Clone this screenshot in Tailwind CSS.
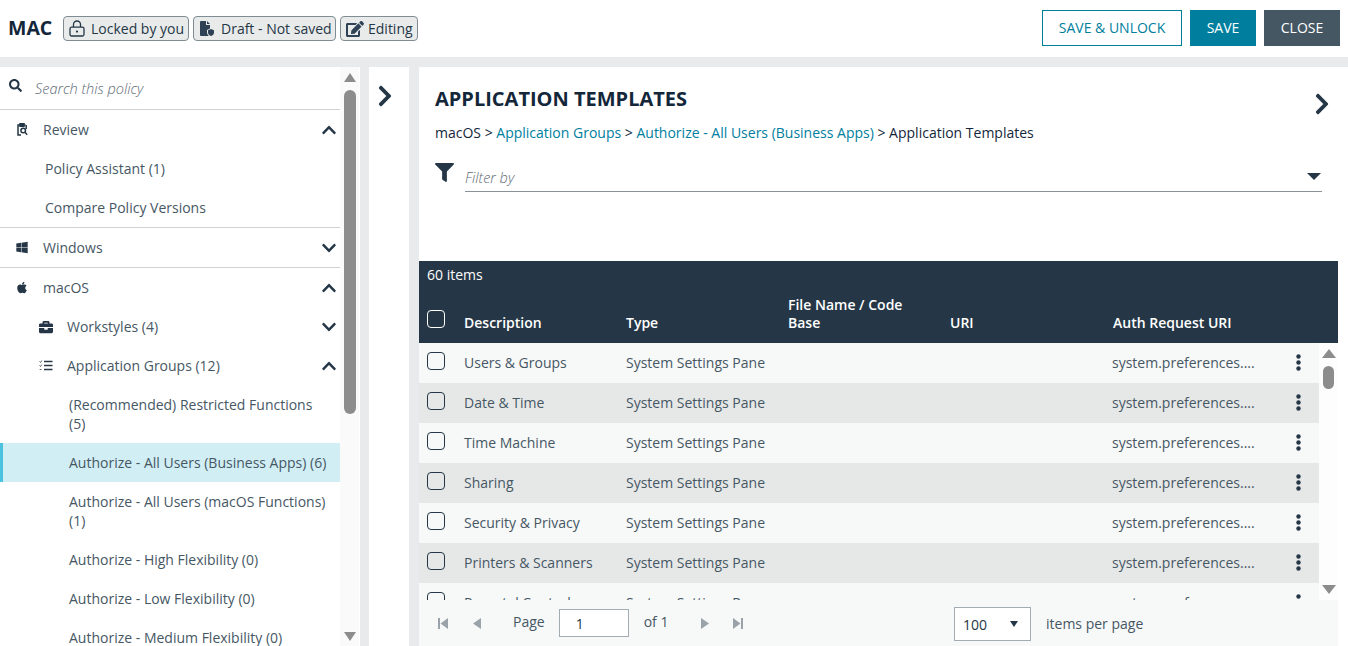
<!DOCTYPE html>
<html lang="en">
<head>
<meta charset="utf-8">
<title>MAC</title>
<script src="https://cdn.jsdelivr.net/npm/@tailwindcss/browser@4"></script>
</head>
<body class="font-['Open_Sans',sans-serif] text-[14px] text-[#465764] bg-white">
<div class="w-[1348px] h-[646px] overflow-hidden flex flex-col">

  <!-- top bar -->
  <header class="h-[57px] shrink-0 bg-white flex items-start pl-[8px] pr-[8px]">
    <h1 class="w-[55px] text-[19.500px] leading-[24px] font-bold text-[#14273a] mt-[16px]">MAC</h1>
    <div class="flex gap-[4px] mt-[16px]">
      <span class="h-[25px] w-[126px] rounded-[4px] border border-[#7f8c94] bg-[#e9ebeb] flex items-center pl-[5px] gap-[6px] text-[#253746] whitespace-nowrap">
        <svg class="w-[16px] h-[17px]" viewBox="0 0 16 17" fill="none" stroke="#253746" stroke-width="1.300"><rect x="1" y="7.200" width="14" height="8.800" rx="1.500"/><path d="M4.500 7V4.500a3.500 3.500 0 0 1 7 0V7"/><circle cx="8" cy="11.600" r="1.100" fill="#253746" stroke="none"/></svg>
        Locked by you
      </span>
      <span class="h-[25px] w-[143px] rounded-[4px] border border-[#7f8c94] bg-[#e9ebeb] flex items-center pl-[6px] gap-[7px] text-[#253746] whitespace-nowrap">
        <svg class="w-[14px] h-[15px]" viewBox="0 0 14 15" fill="#2f4255"><path d="M0 1a1 1 0 0 1 1-1h5v4h4v3.500L7 9v2c0 1.500.5 2.800 1.700 4H1a1 1 0 0 1-1-1z"/><path d="M7 0l3 3H7z"/><path d="M11 8l3 1.300v2.400c0 1.500-1.300 2.700-3 3.300-1.700-.6-3-1.800-3-3.300V9.300z"/></svg>
        Draft - Not saved
      </span>
      <span class="h-[25px] w-[78px] rounded-[4px] border border-[#7f8c94] bg-[#e9ebeb] flex items-center pl-[5px] gap-[4px] text-[#253746] whitespace-nowrap">
        <svg class="w-[18px] h-[16px]" viewBox="0 0 576 512" fill="#2f4255"><path d="M402.600 83.200l90.200 90.200c3.800 3.800 3.800 10 0 13.800L274.400 405.600l-92.800 10.300c-12.400 1.400-22.900-9.100-21.500-21.500l10.300-92.800L388.800 83.200c3.800-3.800 10-3.800 13.800 0zm162-22.900l-48.800-48.800c-15.200-15.200-39.900-15.200-55.200 0l-35.400 35.400c-3.800 3.800-3.800 10 0 13.800l90.200 90.200c3.800 3.800 10 3.800 13.800 0l35.400-35.400c15.200-15.300 15.200-40 0-55.200zM384 346.200V448H64V128h229.800c3.200 0 6.200-1.300 8.500-3.500l40-40c7.600-7.600 2.200-20.500-8.500-20.500H48C21.500 64 0 85.500 0 112v352c0 26.500 21.500 48 48 48h352c26.500 0 48-21.500 48-48V306.200c0-10.700-12.900-16-20.500-8.500l-40 40c-2.200 2.300-3.500 5.300-3.500 8.500z"/></svg>
        Editing
      </span>
    </div>
    <div class="ml-auto flex gap-[8px] mt-[10px]">
      <button class="w-[140px] h-[36px] pb-[2px] border border-[#007e9e] bg-white text-[#007e9e]">SAVE &amp; UNLOCK</button>
      <button class="w-[66px] h-[36px] pb-[2px] bg-[#007e9e] text-white">SAVE</button>
      <button class="w-[76px] h-[36px] pb-[2px] bg-[#465764] text-white">CLOSE</button>
    </div>
  </header>

  <!-- body -->
  <div class="flex-1 min-h-0 bg-[#e9eaeb] pt-[10px] flex">

    <!-- policy tree -->
    <aside class="w-[360px] shrink-0 bg-white flex overflow-hidden">
      <nav class="w-[340px] shrink-0">
        <div class="h-[43px] border-b border-[#d0d3d4] flex items-start pl-[9px]">
          <svg class="w-[13px] h-[13px] mt-[12px]" viewBox="0 0 512 512" fill="#253746"><path d="M505 442.700L405.300 343c-4.500-4.500-10.600-7-17-7H372c27.600-35.300 44-79.700 44-128C416 93.100 322.900 0 208 0S0 93.100 0 208s93.100 208 208 208c48.300 0 92.700-16.400 128-44v16.300c0 6.400 2.500 12.500 7 17l99.700 99.700c9.400 9.400 24.600 9.400 33.900 0l28.300-28.300c9.400-9.400 9.400-24.600.1-34zM208 336c-70.700 0-128-57.200-128-128 0-70.700 57.200-128 128-128 70.700 0 128 57.200 128 128 0 70.700-57.200 128-128 128z"/></svg>
          <span class="ml-[13px] mt-[12px] text-[14.500px] leading-[19px] italic font-light text-[#5d6b75]">Search this policy</span>
        </div>

        <div class="h-[39px] flex items-center pl-[16px] pr-[4px]">
          <svg class="w-[12px] h-[13px]" viewBox="0 0 12 13" fill="none" stroke="#253746" stroke-width="1.500"><path d="M9.500 2H2v10h3"/><path d="M4 .8h4v2.400H4z" fill="#253746"/><circle cx="7.200" cy="7.500" r="2.300"/><path d="M9 9.300l2.200 2.400"/><path d="M10.200 2v4" /></svg>
          <span class="ml-[15px] flex-1">Review</span>
          <svg class="w-[14px] h-[16px]" viewBox="0 0 448 512" fill="#253746"><path d="M240.971 130.524l194.343 194.343c9.373 9.373 9.373 24.569 0 33.941l-22.667 22.667c-9.357 9.357-24.522 9.375-33.901.04L224 227.495 69.255 381.516c-9.379 9.335-24.544 9.317-33.901-.04l-22.667-22.667c-9.373-9.373-9.373-24.569 0-33.941L207.030 130.525c9.372-9.373 24.568-9.373 33.941-.001z"/></svg>
        </div>
        <div class="h-[39px] flex items-center pl-[45px]">Policy Assistant (1)</div>
        <div class="h-[40px] flex items-center pl-[45px] border-b border-[#d0d3d4] pb-[1px]">Compare Policy Versions</div>

        <div class="h-[40px] flex items-center pl-[16px] pr-[4px] border-b border-[#d0d3d4]">
          <svg class="w-[12px] h-[13px]" viewBox="0 0 448 512" fill="#253746"><path d="M0 93.700l183.600-25.300v177.400H0V93.700zm0 324.600l183.600 25.300V268.400H0v149.900zm203.800 28L448 480V268.400H203.800v177.900zm0-380.600v180.100H448V32L203.800 65.700z"/></svg>
          <span class="ml-[15px] flex-1">Windows</span>
          <svg class="w-[14px] h-[16px]" viewBox="0 0 448 512" fill="#253746"><path d="M207.029 381.476L12.686 187.132c-9.373-9.373-9.373-24.569 0-33.941l22.667-22.667c9.357-9.357 24.522-9.375 33.901-.04L224 284.505l154.745-154.021c9.379-9.335 24.544-9.317 33.901.04l22.667 22.667c9.373 9.373 9.373 24.569 0 33.941L240.971 381.476c-9.373 9.372-24.569 9.372-33.942 0z"/></svg>
        </div>

        <div class="h-[39px] flex items-center pl-[17px] pr-[4px]">
          <svg class="w-[10px] h-[13px]" viewBox="0 0 384 512" fill="#253746"><path d="M318.700 268.700c-.2-36.700 16.400-64.400 50-84.800-18.800-26.900-47.200-41.700-84.700-44.600-35.500-2.800-74.300 20.700-88.500 20.700-15 0-49.400-19.700-76.400-19.700C63.300 141.200 4 184.800 4 273.500q0 39.300 14.400 81.200c12.800 36.700 59 126.700 107.200 125.200 25.200-.6 43-17.900 75.800-17.900 31.800 0 48.300 17.900 76.400 17.900 48.600-.7 90.400-82.500 102.600-119.300-65.200-30.700-61.700-90-61.700-91.900zm-56.600-164.200c27.300-32.400 24.800-61.900 24-72.500-24.100 1.400-52 16.400-67.900 34.900-17.500 19.800-27.800 44.300-25.600 71.900 26.100 2 49.900-11.400 69.500-34.300z"/></svg>
          <span class="ml-[16px] flex-1">macOS</span>
          <svg class="w-[14px] h-[16px]" viewBox="0 0 448 512" fill="#253746"><path d="M240.971 130.524l194.343 194.343c9.373 9.373 9.373 24.569 0 33.941l-22.667 22.667c-9.357 9.357-24.522 9.375-33.901.04L224 227.495 69.255 381.516c-9.379 9.335-24.544 9.317-33.901-.04l-22.667-22.667c-9.373-9.373-9.373-24.569 0-33.941L207.030 130.525c9.372-9.373 24.568-9.373 33.941-.001z"/></svg>
        </div>
        <div class="h-[39px] flex items-center pl-[39px] pr-[4px]">
          <svg class="w-[14px] h-[14px]" viewBox="0 0 512 512" fill="#253746"><path d="M320 336c0 8.840-7.160 16-16 16h-96c-8.840 0-16-7.160-16-16v-48H0v144c0 25.600 22.400 48 48 48h416c25.600 0 48-22.400 48-48V288H320v48zm144-208h-80V80c0-25.600-22.400-48-48-48H176c-25.600 0-48 22.400-48 48v48H48c-25.600 0-48 22.400-48 48v80h512v-80c0-25.600-22.400-48-48-48zm-144 0H192V96h128v32z"/></svg>
          <span class="ml-[14px] flex-1">Workstyles (4)</span>
          <svg class="w-[14px] h-[16px]" viewBox="0 0 448 512" fill="#253746"><path d="M207.029 381.476L12.686 187.132c-9.373-9.373-9.373-24.569 0-33.941l22.667-22.667c9.357-9.357 24.522-9.375 33.901-.04L224 284.505l154.745-154.021c9.379-9.335 24.544-9.317 33.901.04l22.667 22.667c9.373 9.373 9.373 24.569 0 33.941L240.971 381.476c-9.373 9.372-24.569 9.372-33.942 0z"/></svg>
        </div>
        <div class="h-[39px] flex items-center pl-[39px] pr-[4px]">
          <svg class="w-[14px] h-[11px]" viewBox="0 0 14 11" fill="none" stroke="#253746"><path d="M5 1.500h8.500M5 5.500h8.500M5 9.500h8.500" stroke-width="1.400"/><path d="M.5 1.500l1 1 1.300-2M.5 5.500l1 1 1.300-2M.7 9.500h1.800" stroke-width=".8"/></svg>
          <span class="ml-[14px] flex-1">Application Groups (12)</span>
          <svg class="w-[14px] h-[16px]" viewBox="0 0 448 512" fill="#253746"><path d="M240.971 130.524l194.343 194.343c9.373 9.373 9.373 24.569 0 33.941l-22.667 22.667c-9.357 9.357-24.522 9.375-33.901.04L224 227.495 69.255 381.516c-9.379 9.335-24.544 9.317-33.901-.04l-22.667-22.667c-9.373-9.373-9.373-24.569 0-33.941L207.030 130.525c9.372-9.373 24.568-9.373 33.941-.001z"/></svg>
        </div>

        <div class="pl-[69px] pr-[10px] py-[10px] leading-[19px]">(Recommended) Restricted Functions (5)</div>
        <div class="h-[39px] flex items-center pl-[66px] border-l-[3px] border-[#4bc3e0] bg-[#d1eef5]">Authorize - All Users (Business Apps) (6)</div>
        <div class="pl-[69px] pr-[10px] py-[10px] leading-[19px]">Authorize - All Users (macOS Functions) (1)</div>
        <div class="h-[39px] flex items-center pl-[69px]">Authorize - High Flexibility (0)</div>
        <div class="h-[39px] flex items-center pl-[69px]">Authorize - Low Flexibility (0)</div>
        <div class="h-[39px] flex items-center pl-[69px]">Authorize - Medium Flexibility (0)</div>
      </nav>
      <div class="w-[19px] bg-[#fafafa] flex flex-col items-center pt-[6px]">
        <span class="w-0 h-0 border-x-[6.500px] border-x-transparent border-b-[9px] border-b-[#8c8c8c]"></span>
        <span class="w-[12px] h-[324px] mt-[8px] rounded-[6px] bg-[#8c8c8c]"></span>
        <span class="w-0 h-0 mt-[218px] border-x-[6.500px] border-x-transparent border-t-[9px] border-t-[#8c8c8c]"></span>
      </div>
    </aside>

    <!-- collapsed pane -->
    <div class="ml-[9px] w-[40px] shrink-0 bg-white pl-[8px] pt-[17px]">
      <svg class="w-[16px] h-[24px]" viewBox="0 0 320 512" fill="#253746"><path d="M285.476 272.971L91.132 467.314c-9.373 9.373-24.569 9.373-33.941 0l-22.667-22.667c-9.357-9.357-9.375-24.522-.04-33.901L188.505 256 34.484 101.255c-9.335-9.379-9.317-24.544.04-33.901l22.667-22.667c9.373-9.373 24.569-9.373 33.941 0L285.475 239.030c9.373 9.372 9.373 24.568.001 33.941z"/></svg>
    </div>

    <!-- main -->
    <main class="ml-[10px] flex-1 min-w-0 bg-white flex flex-col">
      <div class="w-[919px] h-[194px] shrink-0 pl-[16px] pt-[19px]">
        <div class="flex justify-between pr-[8px]">
          <h2 class="text-[20px] leading-[26px] font-bold text-[#14273a]">APPLICATION TEMPLATES</h2>
          <svg class="w-[16px] h-[24px] mt-[6px]" viewBox="0 0 320 512" fill="#253746"><path d="M285.476 272.971L91.132 467.314c-9.373 9.373-24.569 9.373-33.941 0l-22.667-22.667c-9.357-9.357-9.375-24.522-.04-33.901L188.505 256 34.484 101.255c-9.335-9.379-9.317-24.544.04-33.901l22.667-22.667c9.373-9.373 24.569-9.373 33.941 0L285.475 239.030c9.373 9.372 9.373 24.568.001 33.941z"/></svg>
        </div>
        <p class="mt-[7px] leading-[19px] text-[#14273a]">macOS &gt; <span class="text-[#007e9e]">Application Groups</span> &gt; <span class="text-[#007e9e]">Authorize - All Users (Business Apps)</span> &gt; Application Templates</p>
        <div class="flex mt-[20px]">
          <svg class="w-[19px] h-[19px] mt-[1px]" viewBox="0 0 512 512" fill="#253746"><path d="M487.976 0H24.028C2.710 0-8.047 25.866 7.058 40.971L192 225.941V432c0 7.831 3.821 15.170 10.237 19.662l80 55.980C298.020 518.690 320 507.493 320 487.980V225.941l184.947-184.970C520.021 25.896 509.338 0 487.976 0z"/></svg>
          <div class="ml-[11px] w-[857px] h-[30px] border-b border-[#8a9299] flex items-center justify-between pt-[2px]">
            <span class="italic text-[14.500px] font-light text-[#5d6b75]">Filter by</span>
            <span class="w-0 h-0 mr-[1px] mb-[2px] border-x-[7px] border-x-transparent border-t-[7.500px] border-t-[#253746]"></span>
          </div>
        </div>
      </div>

      <!-- grid -->
      <div class="w-[919px] flex-1 min-h-0 flex flex-col">
        <div class="h-[82px] shrink-0 bg-[#253746] text-white">
          <div class="pl-[8px] pt-[4px] leading-[19px]">60 items</div>
          <div class="grid grid-cols-[45px_162px_162px_162px_162px_1fr] items-end mt-[12px]">
            <span class="ml-[8px] mb-[5px] w-[18px] h-[18px] rounded-[4px] border border-white"></span>
            <span class="font-semibold pb-[1px] leading-[18px]">Description</span>
            <span class="font-semibold pb-[1px] leading-[18px]">Type</span>
            <span class="font-semibold pb-[1px] leading-[18px] w-[130px]">File Name / Code Base</span>
            <span class="font-semibold pb-[1px] leading-[18px]">URI</span>
            <span class="font-semibold pb-[1px] pl-[1px] leading-[18px]">Auth Request URI</span>
          </div>
        </div>
        <div class="h-[257px] shrink-0 flex">
          <div class="w-[900px] h-[257px] overflow-hidden">
            <div class="h-[40px] pb-[2px] bg-[#f7f8f8] grid grid-cols-[45px_162px_162px_324px_1fr_22px] items-center">
              <span class="ml-[8px] -mt-[2px] w-[18px] h-[18px] rounded-[4px] border border-[#253746]"></span><span>Users &amp; Groups</span><span>System Settings Pane</span><span></span><span>system.preferences....</span>
              <svg class="w-[5px] h-[17px] ml-[-1px]" viewBox="0 0 5 17" fill="#253746"><circle cx="2.500" cy="2.500" r="2.200"/><circle cx="2.500" cy="8.500" r="2.200"/><circle cx="2.500" cy="14.500" r="2.200"/></svg>
            </div>
            <div class="h-[40px] pb-[2px] bg-[#e6e8e8] grid grid-cols-[45px_162px_162px_324px_1fr_22px] items-center">
              <span class="ml-[8px] -mt-[2px] w-[18px] h-[18px] rounded-[4px] border border-[#253746]"></span><span>Date &amp; Time</span><span>System Settings Pane</span><span></span><span>system.preferences....</span>
              <svg class="w-[5px] h-[17px] ml-[-1px]" viewBox="0 0 5 17" fill="#253746"><circle cx="2.500" cy="2.500" r="2.200"/><circle cx="2.500" cy="8.500" r="2.200"/><circle cx="2.500" cy="14.500" r="2.200"/></svg>
            </div>
            <div class="h-[40px] pb-[2px] bg-[#f7f8f8] grid grid-cols-[45px_162px_162px_324px_1fr_22px] items-center">
              <span class="ml-[8px] -mt-[2px] w-[18px] h-[18px] rounded-[4px] border border-[#253746]"></span><span>Time Machine</span><span>System Settings Pane</span><span></span><span>system.preferences....</span>
              <svg class="w-[5px] h-[17px] ml-[-1px]" viewBox="0 0 5 17" fill="#253746"><circle cx="2.500" cy="2.500" r="2.200"/><circle cx="2.500" cy="8.500" r="2.200"/><circle cx="2.500" cy="14.500" r="2.200"/></svg>
            </div>
            <div class="h-[40px] pb-[2px] bg-[#e6e8e8] grid grid-cols-[45px_162px_162px_324px_1fr_22px] items-center">
              <span class="ml-[8px] -mt-[2px] w-[18px] h-[18px] rounded-[4px] border border-[#253746]"></span><span>Sharing</span><span>System Settings Pane</span><span></span><span>system.preferences....</span>
              <svg class="w-[5px] h-[17px] ml-[-1px]" viewBox="0 0 5 17" fill="#253746"><circle cx="2.500" cy="2.500" r="2.200"/><circle cx="2.500" cy="8.500" r="2.200"/><circle cx="2.500" cy="14.500" r="2.200"/></svg>
            </div>
            <div class="h-[40px] pb-[2px] bg-[#f7f8f8] grid grid-cols-[45px_162px_162px_324px_1fr_22px] items-center">
              <span class="ml-[8px] -mt-[2px] w-[18px] h-[18px] rounded-[4px] border border-[#253746]"></span><span>Security &amp; Privacy</span><span>System Settings Pane</span><span></span><span>system.preferences....</span>
              <svg class="w-[5px] h-[17px] ml-[-1px]" viewBox="0 0 5 17" fill="#253746"><circle cx="2.500" cy="2.500" r="2.200"/><circle cx="2.500" cy="8.500" r="2.200"/><circle cx="2.500" cy="14.500" r="2.200"/></svg>
            </div>
            <div class="h-[40px] pb-[2px] bg-[#e6e8e8] grid grid-cols-[45px_162px_162px_324px_1fr_22px] items-center">
              <span class="ml-[8px] -mt-[2px] w-[18px] h-[18px] rounded-[4px] border border-[#253746]"></span><span>Printers &amp; Scanners</span><span>System Settings Pane</span><span></span><span>system.preferences....</span>
              <svg class="w-[5px] h-[17px] ml-[-1px]" viewBox="0 0 5 17" fill="#253746"><circle cx="2.500" cy="2.500" r="2.200"/><circle cx="2.500" cy="8.500" r="2.200"/><circle cx="2.500" cy="14.500" r="2.200"/></svg>
            </div>
            <div class="h-[40px] pb-[2px] bg-[#f7f8f8] grid grid-cols-[45px_162px_162px_324px_1fr_22px] items-center">
              <span class="ml-[8px] -mt-[2px] w-[18px] h-[18px] rounded-[4px] border border-[#253746]"></span><span>Parental Controls</span><span>System Settings Pane</span><span></span><span>system.preferences....</span>
              <svg class="w-[5px] h-[17px] ml-[-1px]" viewBox="0 0 5 17" fill="#253746"><circle cx="2.500" cy="2.500" r="2.200"/><circle cx="2.500" cy="8.500" r="2.200"/><circle cx="2.500" cy="14.500" r="2.200"/></svg>
            </div>
          </div>
          <div class="w-[19px] h-[257px] bg-[#fdfdfd] flex flex-col items-center pt-[6px]">
            <span class="w-0 h-0 border-x-[7px] border-x-transparent border-b-[9px] border-b-[#8c8c8c]"></span>
            <span class="w-[11px] h-[23px] mt-[8px] rounded-[6px] bg-[#8c8c8c]"></span>
            <span class="w-0 h-0 mt-[196px] border-x-[7px] border-x-transparent border-t-[9px] border-t-[#8c8c8c]"></span>
          </div>
        </div>
        <div class="h-[46px] shrink-0 bg-[#f7f8f8] flex items-start text-[#465764]">
          <div class="flex items-center w-[340px] h-[46px]">
            <svg class="ml-[19px] w-[10px] h-[11px]" viewBox="0 0 10 11" fill="#9aa3a9"><path d="M0 0h2v11H0zM10 0v11L2.500 5.500z"/></svg>
            <svg class="ml-[24px] w-[9px] h-[11px]" viewBox="0 0 9 11" fill="#9aa3a9"><path d="M9 0v11L1 5.500z"/></svg>
            <span class="ml-[32px] mt-[-3px]">Page</span>
            <span class="ml-[14px] w-[70px] h-[28px] border border-[#a3acb2] bg-white pl-[16px] flex items-center text-[#253746]">1</span>
            <span class="ml-[15px] mt-[-3px]">of 1</span>
            <svg class="ml-[33px] w-[9px] h-[11px]" viewBox="0 0 9 11" fill="#9aa3a9"><path d="M0 0v11l8-5.500z"/></svg>
            <svg class="ml-[23px] w-[10px] h-[11px]" viewBox="0 0 10 11" fill="#9aa3a9"><path d="M8 0h2v11H8zM0 0v11l7.500-5.500z"/></svg>
          </div>
          <span class="ml-[195px] mt-[7px] w-[77px] h-[34px] border border-[#a3acb2] bg-white pl-[8px] pr-[12px] flex items-center justify-between text-[#253746]">100
            <span class="w-0 h-0 border-x-[4px] border-x-transparent border-t-[6px] border-t-[#253746]"></span>
          </span>
          <span class="ml-[15px] mt-[14px] leading-[19px]">items per page</span>
        </div>
      </div>
    </main>
  </div>
</div>
</body>
</html>
